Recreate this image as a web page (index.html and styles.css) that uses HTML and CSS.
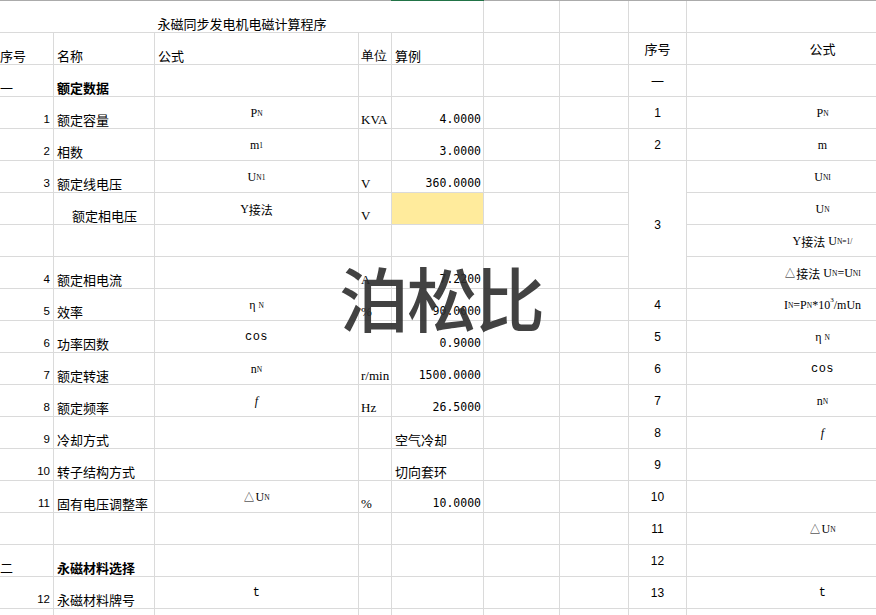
FILE: index.html
```html
<!DOCTYPE html>
<html lang="zh">
<head>
<meta charset="utf-8">
<title>永磁同步发电机电磁计算程序</title>
<link rel="stylesheet" href="styles.css">
</head>
<body>
<div class="topline"><span class="g lead"></span><span class="sel"></span><span class="g rest"></span></div>
<div class="sheet">
  <!-- row 0 -->
  <div class="c title">永磁同步发电机电磁计算程序</div>
  <div class="c"></div><div class="c"></div><div class="c"></div><div class="c"></div>
  <!-- row 1 -->
  <div class="c txt first">序号</div>
  <div class="c txt">名称</div>
  <div class="c txt">公式</div>
  <div class="c txt unit">单位</div>
  <div class="c txt">算例</div>
  <div class="c"></div><div class="c"></div>
  <div class="c mid head">序号</div>
  <div class="c mid head">公式</div>
  <!-- row 2 -->
  <div class="c txt first">一</div>
  <div class="c txt bold">额定数据</div>
  <div class="c"></div><div class="c"></div><div class="c"></div><div class="c"></div><div class="c"></div>
  <div class="c mid head">一</div>
  <div class="c"></div>
  <!-- row 3 -->
  <div class="c no">1</div>
  <div class="c txt">额定容量</div>
  <div class="c fx">P<span class="s">N</span></div>
  <div class="c unit">KVA</div>
  <div class="c val">4.0000</div>
  <div class="c"></div><div class="c"></div>
  <div class="c mid rn">1</div>
  <div class="c rfx">P<span class="s">N</span></div>
  <!-- row 4 -->
  <div class="c no">2</div>
  <div class="c txt">相数</div>
  <div class="c fx">m<span class="s">1</span></div>
  <div class="c"></div>
  <div class="c val">3.0000</div>
  <div class="c"></div><div class="c"></div>
  <div class="c mid rn">2</div>
  <div class="c rfx">m</div>
  <!-- row 5 -->
  <div class="c no">3</div>
  <div class="c txt">额定线电压</div>
  <div class="c fx">U<span class="s">N1</span></div>
  <div class="c unit">V</div>
  <div class="c val">360.0000</div>
  <div class="c"></div><div class="c"></div>
  <div class="c mid rn merge4">3</div>
  <div class="c rfx">U<span class="s">NI</span></div>
  <!-- row 6 -->
  <div class="c"></div>
  <div class="c txt center">额定相电压</div>
  <div class="c fx">Y<span class="cjk">接法</span></div>
  <div class="c unit">V</div>
  <div class="c fill"></div>
  <div class="c"></div><div class="c"></div>
  <div class="c rfx">U<span class="s">N</span></div>
  <!-- row 7 -->
  <div class="c"></div><div class="c"></div><div class="c"></div><div class="c"></div><div class="c"></div><div class="c"></div><div class="c"></div>
  <div class="c rfx">Y<span class="cjk">接法</span>&nbsp;U<span class="s">N=1/</span></div>
  <!-- row 8 -->
  <div class="c no">4</div>
  <div class="c txt">额定相电流</div>
  <div class="c"></div>
  <div class="c unit">A</div>
  <div class="c val">7.2200</div>
  <div class="c"></div><div class="c"></div>
  <div class="c rfx">△<span class="cjk">接法</span>&nbsp;U<span class="s">N</span>=U<span class="s">NI</span></div>
  <!-- row 9 -->
  <div class="c no">5</div>
  <div class="c txt">效率</div>
  <div class="c fx">η&nbsp;<span class="s">N</span></div>
  <div class="c unit">%</div>
  <div class="c val">90.0000</div>
  <div class="c"></div><div class="c"></div>
  <div class="c mid rn">4</div>
  <div class="c rfx">I<span class="s">N</span>=P<span class="s">N</span>*10<span class="sup">3</span>/mUn</div>
  <!-- row 10 -->
  <div class="c no">6</div>
  <div class="c txt">功率因数</div>
  <div class="c fx mono">cos</div>
  <div class="c"></div>
  <div class="c val">0.9000</div>
  <div class="c"></div><div class="c"></div>
  <div class="c mid rn">5</div>
  <div class="c rfx">η&nbsp;<span class="s">N</span></div>
  <!-- row 11 -->
  <div class="c no">7</div>
  <div class="c txt">额定转速</div>
  <div class="c fx">n<span class="s">N</span></div>
  <div class="c unit">r/min</div>
  <div class="c val">1500.0000</div>
  <div class="c"></div><div class="c"></div>
  <div class="c mid rn">6</div>
  <div class="c rfx mono">cos</div>
  <!-- row 12 -->
  <div class="c no">8</div>
  <div class="c txt">额定频率</div>
  <div class="c fx"><i>f</i></div>
  <div class="c unit">Hz</div>
  <div class="c val">26.5000</div>
  <div class="c"></div><div class="c"></div>
  <div class="c mid rn">7</div>
  <div class="c rfx">n<span class="s">N</span></div>
  <!-- row 13 -->
  <div class="c no">9</div>
  <div class="c txt">冷却方式</div>
  <div class="c"></div>
  <div class="c"></div>
  <div class="c txt">空气冷却</div>
  <div class="c"></div><div class="c"></div>
  <div class="c mid rn">8</div>
  <div class="c rfx"><i>f</i></div>
  <!-- row 14 -->
  <div class="c no">10</div>
  <div class="c txt">转子结构方式</div>
  <div class="c"></div>
  <div class="c"></div>
  <div class="c txt">切向套环</div>
  <div class="c"></div><div class="c"></div>
  <div class="c mid rn">9</div>
  <div class="c"></div>
  <!-- row 15 -->
  <div class="c no">11</div>
  <div class="c txt">固有电压调整率</div>
  <div class="c fx">△U<span class="s">N</span></div>
  <div class="c unit">%</div>
  <div class="c val">10.0000</div>
  <div class="c"></div><div class="c"></div>
  <div class="c mid rn">10</div>
  <div class="c"></div>
  <!-- row 16 -->
  <div class="c"></div><div class="c"></div><div class="c"></div><div class="c"></div><div class="c"></div><div class="c"></div><div class="c"></div>
  <div class="c mid rn">11</div>
  <div class="c rfx">△U<span class="s">N</span></div>
  <!-- row 17 -->
  <div class="c txt first">二</div>
  <div class="c txt bold">永磁材料选择</div>
  <div class="c"></div><div class="c"></div><div class="c"></div><div class="c"></div><div class="c"></div>
  <div class="c mid rn">12</div>
  <div class="c"></div>
  <!-- row 18 -->
  <div class="c no">12</div>
  <div class="c txt">永磁材料牌号</div>
  <div class="c fx mono">t</div>
  <div class="c"></div><div class="c"></div><div class="c"></div><div class="c"></div>
  <div class="c mid rn">13</div>
  <div class="c rfx mono">t</div>
  <!-- row 19 -->
  <div class="c"></div><div class="c"></div><div class="c"></div><div class="c"></div><div class="c"></div><div class="c"></div><div class="c"></div><div class="c"></div><div class="c"></div>
</div>
<div class="wm">泊松比</div>
</body>
</html>
```

FILE: styles.css
```css
html, body {
  margin: 0;
  padding: 0;
  background: #fff;
}
body {
  width: 876px;
  height: 615px;
  overflow: hidden;
  position: relative;
  font-family: "Noto Sans CJK SC", sans-serif;
  font-size: 13px;
  color: #000;
}
.topline {
  display: flex;
  height: 1px;
  width: 959px;
}
.topline .g { background: #ababab; }
.topline .lead { width: 391px; }
.topline .sel { width: 93px; background: #217346; }
.topline .rest { flex: 1; }

.sheet {
  display: grid;
  grid-template-columns: 54px 101px 204px 33px 92px 76px 69px 58px 272px;
  grid-auto-rows: 32px;
  width: 959px;
}
.c {
  box-sizing: border-box;
  border-right: 1px solid #dadada;
  border-bottom: 1px solid #dadada;
  display: flex;
  align-items: flex-end;
  padding: 0 2px 1px 3px;
  white-space: nowrap;
  overflow: hidden;
  line-height: 15px;
}
.title {
  grid-column: span 5;
  justify-content: center;
  padding-bottom: 1px;
}
.first { padding-left: 0; }
.center { justify-content: center; }
.bold { font-weight: 700; }
.no {
  justify-content: flex-end;
  padding-right: 3px;
  padding-bottom: 3px;
  font-family: "Liberation Sans", sans-serif;
  font-size: 11.5px;
  line-height: 12px;
}
.unit {
  padding-left: 2px;
  font-family: "Liberation Serif", serif;
}
.val {
  justify-content: flex-end;
  padding-right: 2px;
  padding-bottom: 3px;
  font-family: "DejaVu Sans Mono", monospace;
  font-size: 11.5px;
  line-height: 12px;
}
.fill { background: #ffeb9c; }
.fx, .rfx {
  align-items: center;
  justify-content: center;
  padding: 2px 0 0;
  font-family: "Liberation Serif", serif;
  font-size: 12px;
}
.mid {
  align-items: center;
  justify-content: center;
  padding: 2px 0 0;
}
.head { padding-top: 0; }
.rn {
  font-family: "Liberation Sans", sans-serif;
  font-size: 12px;
}
.merge4 { grid-row: span 4; }
.s { font-size: 7.5px; }
.cjk { font-family: "Noto Sans CJK SC", sans-serif; font-size: 12px; }
.mono {
  font-family: "Liberation Mono", monospace;
  font-size: 12px;
  letter-spacing: 0.5px;
}
.sup {
  font-size: 7px;
  position: relative;
  top: -5px;
}
.wm {
  position: absolute;
  left: 339px;
  top: 262px;
  font-size: 70px;
  line-height: 1;
  font-weight: 500;
  letter-spacing: -2px;
  color: rgba(45, 45, 45, 0.9);
  white-space: nowrap;
  pointer-events: none;
}
```
